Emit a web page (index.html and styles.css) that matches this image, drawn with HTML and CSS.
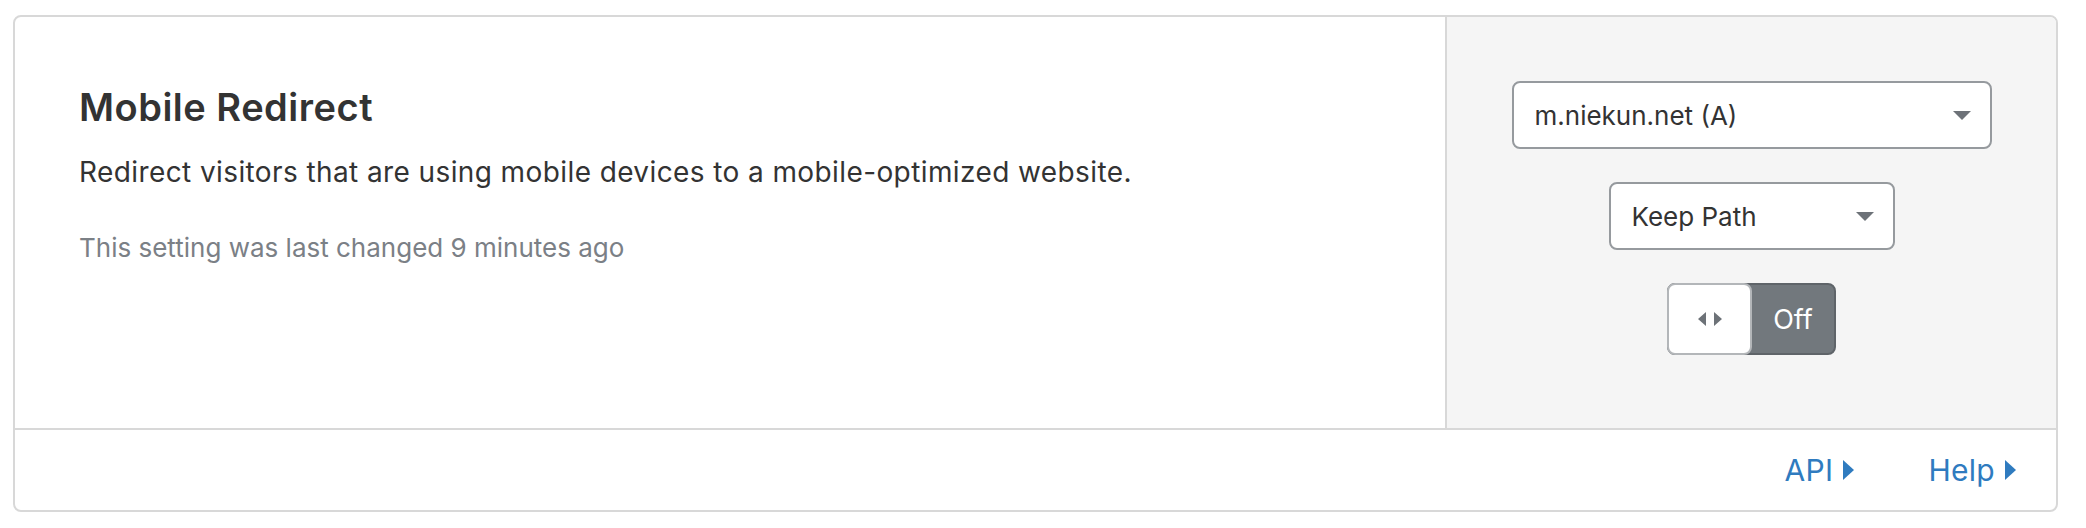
FILE: index.html
```html
<!DOCTYPE html>
<html lang="en">
<head>
<meta charset="utf-8">
<title>Mobile Redirect</title>
<link rel="stylesheet" href="styles.css">
</head>
<body>
<div class="card">
  <div class="main">
    <div class="info">
      <h3 class="title">Mobile Redirect</h3>
      <p class="desc">Redirect visitors that are using mobile devices to a mobile-optimized website.</p>
      <p class="meta">This setting was last changed 9 minutes ago</p>
    </div>
    <div class="controls">
      <div class="select select-wide">
        <span class="select-text">m.niekun.net (A)</span>
        <svg class="caret" width="18" height="9" viewBox="0 0 18 9"><path d="M0 0H18L9 9Z" fill="#6d7278"/></svg>
      </div>
      <div class="select select-narrow">
        <span class="select-text">Keep Path</span>
        <svg class="caret" width="18" height="9" viewBox="0 0 18 9"><path d="M0 0H18L9 9Z" fill="#6d7278"/></svg>
      </div>
      <div class="toggle">
        <div class="knob">
          <svg width="24" height="14" viewBox="0 0 24 14"><path d="M8 0V14L0 7Z M16 0V14L24 7Z" fill="#6d7278"/></svg>
        </div>
        <span class="toggle-label">Off</span>
      </div>
    </div>
  </div>
  <div class="footer">
    <a class="link" href="#">API<svg class="tri" width="11" height="20" viewBox="0 0 11 20"><path d="M0 0L11 10L0 20Z" fill="#2f7bbf"/></svg></a>
    <a class="link" href="#">Help<svg class="tri" width="11" height="20" viewBox="0 0 11 20"><path d="M0 0L11 10L0 20Z" fill="#2f7bbf"/></svg></a>
  </div>
</div>
</body>
</html>
```

FILE: styles.css
```css
* { box-sizing: border-box; }

body {
  margin: 0;
  padding: 15px 28px 0 13px;
  background: #ffffff;
  font-family: Inter, "Noto Sans", "Liberation Sans", sans-serif;
  color: #333333;
}

.card {
  border: 2px solid #d8d8d8;
  border-radius: 8px;
  overflow: hidden;
}

.main {
  display: flex;
  border-bottom: 2px solid #d8d8d8;
}

.info {
  flex: 1;
  padding: 68px 40px 0 64px;
}

.title {
  margin: 0;
  font-size: 38px;
  line-height: 44px;
  font-weight: 600;
  letter-spacing: 0.5px;
  color: #333333;
}

.desc {
  margin: 23px 0 0;
  font-size: 28px;
  line-height: 40px;
  letter-spacing: 0.4px;
  color: #333333;
}

.meta {
  margin: 38px 0 0;
  font-size: 26px;
  line-height: 36px;
  color: #7b8086;
}

.controls {
  width: 611px;
  border-left: 2px solid #d8d8d8;
  background: #f5f5f5;
  display: flex;
  flex-direction: column;
  align-items: center;
  gap: 33px;
  padding: 64px 0 73px;
}

.select {
  height: 68px;
  border: 2px solid #969a9e;
  border-radius: 8px;
  background: #ffffff;
  display: flex;
  align-items: center;
  justify-content: space-between;
  padding: 0 19px 0 21px;
}

.select-wide { width: 480px; }
.select-narrow { width: 286px; }

.select-text {
  font-size: 26px;
  color: #333333;
}

.toggle {
  width: 169px;
  height: 72px;
  display: flex;
  border: 2px solid #5f6469;
  border-radius: 8px;
  background: #72787d;
}

.knob {
  width: 85px;
  margin: -2px 0 -2px -2px;
  background: #ffffff;
  border: 2px solid #b3b6b9;
  border-radius: 8px;
  display: flex;
  align-items: center;
  justify-content: center;
}

.toggle-label {
  flex: 1;
  display: flex;
  align-items: center;
  justify-content: center;
  color: #ffffff;
  font-size: 27px;
}

.footer {
  height: 80px;
  display: flex;
  align-items: center;
  justify-content: flex-end;
  gap: 74px;
  padding-right: 40px;
}

.link {
  display: flex;
  align-items: center;
  gap: 10px;
  color: #2f7bbf;
  text-decoration: none;
  font-size: 30px;
  letter-spacing: 0.3px;
}
```
